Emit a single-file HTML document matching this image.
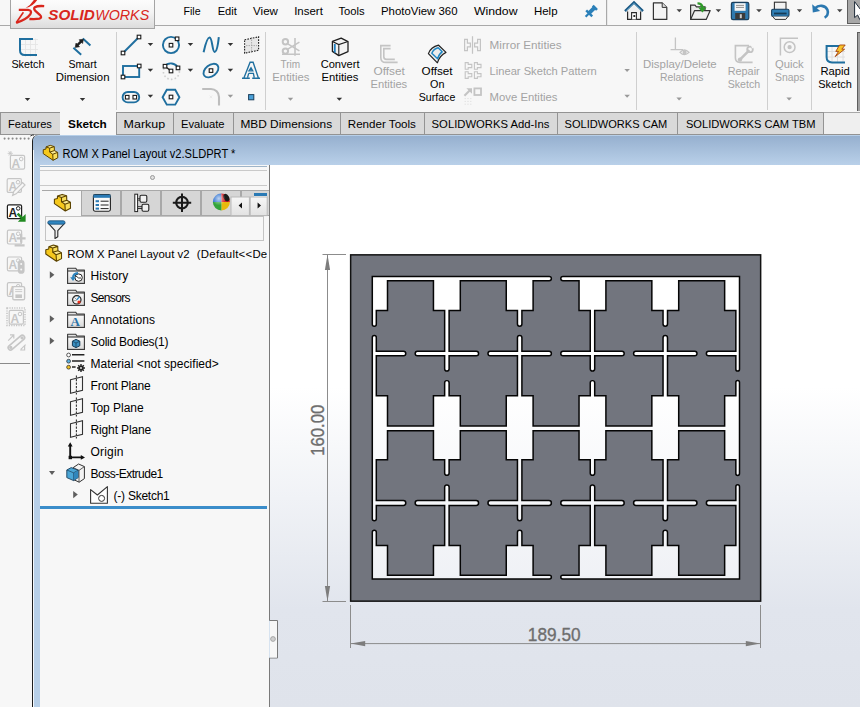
<!DOCTYPE html>
<html><head><meta charset="utf-8"><style>
*{margin:0;padding:0;box-sizing:border-box}
html,body{width:860px;height:707px;overflow:hidden;background:#f7f7f7;font-family:"Liberation Sans", sans-serif;color:#000}
.a{position:absolute}
svg text{font-family:"Liberation Sans",sans-serif}
</style></head>
<body>
<div class="a" style="left:0;top:25px;width:860px;height:1px;background:#a9a9a9"></div>
<div class="a" style="left:10px;top:-1px;width:145px;height:30px;border:1px solid #a4a4a4;background:linear-gradient(#fcfcfc,#f4f4f4 45%,#dcdcdc)"></div>
<div class="a" style="left:605.6px;top:0;width:1.4px;height:25px;background:#a9a9a9"></div>
<div class="a" style="left:607px;top:0;width:1px;height:25px;background:#e9e9e9"></div>
<div class="a" style="left:846.5px;top:-1px;width:14px;height:25px;background:#a7a7a7;border:1px solid #5e5e5e;border-right:none"></div>
<div class="a" style="left:116.0px;top:32px;width:1px;height:78px;background:#cfcfcf"></div>
<div class="a" style="left:264.5px;top:32px;width:1px;height:78px;background:#cfcfcf"></div>
<div class="a" style="left:636.0px;top:32px;width:1px;height:78px;background:#cfcfcf"></div>
<div class="a" style="left:767.0px;top:32px;width:1px;height:78px;background:#cfcfcf"></div>
<div class="a" style="left:811.0px;top:32px;width:1px;height:78px;background:#cfcfcf"></div>
<div class="a" style="left:856.6px;top:31.5px;width:4px;height:79px;background:#a0a0a0;border-left:1.2px solid #5e5e5e;border-top:1px solid #5e5e5e"></div>
<div class="a" style="left:0px;top:112px;width:60.5px;height:22px;background:#d9d9d9;border:1px solid #939393;border-bottom:none"></div>
<div class="a" style="left:59.5px;top:112px;width:56.0px;height:23px;background:#f7f7f7"></div>
<div class="a" style="left:115.5px;top:112px;width:58.0px;height:22px;background:#d9d9d9;border:1px solid #939393;border-bottom:none"></div>
<div class="a" style="left:172.5px;top:112px;width:61.30000000000001px;height:22px;background:#d9d9d9;border:1px solid #939393;border-bottom:none"></div>
<div class="a" style="left:232.8px;top:112px;width:108.39999999999998px;height:22px;background:#d9d9d9;border:1px solid #939393;border-bottom:none"></div>
<div class="a" style="left:340.2px;top:112px;width:85.19999999999999px;height:22px;background:#d9d9d9;border:1px solid #939393;border-bottom:none"></div>
<div class="a" style="left:424.4px;top:112px;width:133.20000000000005px;height:22px;background:#d9d9d9;border:1px solid #939393;border-bottom:none"></div>
<div class="a" style="left:556.6px;top:112px;width:121.79999999999995px;height:22px;background:#d9d9d9;border:1px solid #939393;border-bottom:none"></div>
<div class="a" style="left:677.4px;top:112px;width:147.10000000000002px;height:22px;background:#d9d9d9;border:1px solid #939393;border-bottom:none"></div>
<div class="a" style="left:823.5px;top:112px;width:37px;height:22px;background:#efefef;border-top:1px solid #a8a8a8"></div>
<div class="a" style="left:0;top:133.5px;width:59.5px;height:1.2px;background:#939393"></div>
<div class="a" style="left:115.5px;top:133.5px;width:745px;height:1.2px;background:#939393"></div>
<div class="a" style="left:0;top:362.5px;width:30px;height:1px;background:#8a8a8a"></div>
<div class="a" style="left:32px;top:135px;width:830px;height:580px;background:#b7cfe8;border-left:1.5px solid #1e1e1e;border-top-left-radius:6px"></div>
<div class="a" style="left:33px;top:135.5px;width:827px;height:29.5px;border-top-left-radius:5px;background:linear-gradient(#96b0cf,#b9d0e9)"></div>
<div class="a" style="left:33.3px;top:150px;width:0.8px;height:557px;background:#f4f8fc"></div>
<div class="a" style="left:40px;top:165px;width:229px;height:542px;background:#f7f7f7"></div>
<div class="a" style="left:40px;top:166px;width:227px;height:1px;background:#9eb4c8"></div>
<div class="a" style="left:40px;top:170px;width:227px;height:1px;background:#c9c9c9"></div>
<div class="a" style="left:40px;top:185px;width:227px;height:1px;background:#c9c9c9"></div>
<div class="a" style="left:150px;top:175px;width:5px;height:5px;border-radius:50%;border:1px solid #9a9a9a;background:#e0e0e0"></div>
<div class="a" style="left:42px;top:190px;width:225px;height:1px;background:#a8a8a8"></div>
<div class="a" style="left:41.5px;top:190px;width:40px;height:26px;background:#f7f7f7;border:1px solid #a8a8a8;border-bottom:none;border-left:none"></div>
<div class="a" style="left:81.3px;top:190px;width:40px;height:26px;background:#d6d6d6;border:1px solid #a8a8a8"></div>
<div class="a" style="left:121.1px;top:190px;width:40px;height:26px;background:#d6d6d6;border:1px solid #a8a8a8"></div>
<div class="a" style="left:160.89999999999998px;top:190px;width:40px;height:26px;background:#d6d6d6;border:1px solid #a8a8a8"></div>
<div class="a" style="left:200.7px;top:190px;width:40px;height:26px;background:#d6d6d6;border:1px solid #a8a8a8"></div>
<div class="a" style="left:240.5px;top:190px;width:40px;height:26px;background:#d6d6d6;border:1px solid #a8a8a8"></div>
<div class="a" style="left:45px;top:215.8px;width:219px;height:25.6px;background:#f7f7f7;border:1px solid #c4c4c4"></div>
<div class="a" style="left:40px;top:506px;width:227px;height:3px;background:#3b8dca"></div>
<div class="a" style="left:269.5px;top:165px;width:591px;height:542px;background:linear-gradient(#ffffff 0%,#ffffff 41%,#e1e5ed 82%,#dfe3eb 100%)"></div>
<svg class="a" style="left:0;top:0" width="860" height="707"><path d="M269.5,165 V620.5 H277.5 V658 H269.5 V707" fill="none" stroke="#7a7a7a" stroke-width="1"/><rect x="269.5" y="621" width="7.5" height="36.5" fill="#f7f7f7"/><circle cx="273" cy="639" r="2.4" fill="#d0d0d0" stroke="#9a9a9a" stroke-width="0.8"/></svg>
<svg width="860" height="707" style="position:absolute;left:0;top:0">
<defs><linearGradient id="bg" gradientUnits="userSpaceOnUse" x1="0" y1="165" x2="0" y2="707"><stop offset="0" stop-color="#ffffff"/><stop offset="0.41" stop-color="#ffffff"/><stop offset="0.82" stop-color="#edeff4"/><stop offset="1" stop-color="#e9ecf2"/></linearGradient></defs>
<rect x="350.65" y="254.85" width="410" height="346.3" fill="#72757e" stroke="#121212" stroke-width="1.5"/>
<path d="M371.55,275.65H388.25V311.25H371.55ZM432.70,275.65H461.05V311.25H432.70ZM505.50,275.65H533.85V311.25H505.50ZM578.30,275.65H606.65V311.25H578.30ZM651.10,275.65H679.45V311.25H651.10ZM723.90,275.65H740.25V311.25H723.90ZM371.55,395.05H388.25V460.45H371.55ZM432.70,395.05H461.05V460.45H432.70ZM505.50,395.05H533.85V460.45H505.50ZM578.30,395.05H606.65V460.45H578.30ZM651.10,395.05H679.45V460.45H651.10ZM723.90,395.05H740.25V460.45H723.90ZM371.55,544.85H388.25V579.75H371.55ZM432.70,544.85H461.05V579.75H432.70ZM505.50,544.85H533.85V579.75H505.50ZM578.30,544.85H606.65V579.75H578.30ZM651.10,544.85H679.45V579.75H651.10ZM723.90,544.85H740.25V579.75H723.90ZM371.55,275.65H549.17A2.95,2.95 0 0 1 549.17,281.55H371.55V275.65ZM562.98,275.65H740.25V281.55H562.98A2.95,2.95 0 0 1 562.98,275.65ZM371.55,574.45H549.48A2.65,2.65 0 0 1 549.48,579.75H371.55V574.45ZM562.68,574.45H740.25V579.75H562.68A2.65,2.65 0 0 1 562.68,574.45ZM371.55,425.25H740.25V431.55H371.55V425.25ZM371.55,350.55H403.53A3.00,3.00 0 0 1 403.53,356.55H371.55V350.55ZM417.43,350.55H476.33A3.00,3.00 0 0 1 476.33,356.55H417.43A3.00,3.00 0 0 1 417.43,350.55ZM490.23,350.55H549.12A3.00,3.00 0 0 1 549.12,356.55H490.23A3.00,3.00 0 0 1 490.23,350.55ZM563.03,350.55H621.92A3.00,3.00 0 0 1 621.92,356.55H563.03A3.00,3.00 0 0 1 563.03,350.55ZM635.83,350.55H694.72A3.00,3.00 0 0 1 694.72,356.55H635.83A3.00,3.00 0 0 1 635.83,350.55ZM708.62,350.55H740.25V356.55H708.62A3.00,3.00 0 0 1 708.62,350.55ZM371.55,499.85H403.38A3.15,3.15 0 0 1 403.38,506.15H371.55V499.85ZM417.57,499.85H476.18A3.15,3.15 0 0 1 476.18,506.15H417.57A3.15,3.15 0 0 1 417.57,499.85ZM490.38,499.85H548.98A3.15,3.15 0 0 1 548.98,506.15H490.38A3.15,3.15 0 0 1 490.38,499.85ZM563.18,499.85H621.77A3.15,3.15 0 0 1 621.77,506.15H563.18A3.15,3.15 0 0 1 563.18,499.85ZM635.98,499.85H694.57A3.15,3.15 0 0 1 694.57,506.15H635.98A3.15,3.15 0 0 1 635.98,499.85ZM708.77,499.85H740.25V506.15H708.77A3.15,3.15 0 0 1 708.77,499.85ZM371.55,306.75V306.75H377.05V324.20A2.75,2.75 0 0 1 371.55,324.20ZM371.55,337.60A2.75,2.75 0 0 1 377.05,337.60V399.55H371.55ZM371.55,455.95V455.95H377.05V518.80A2.75,2.75 0 0 1 371.55,518.80ZM371.55,532.20A2.75,2.75 0 0 1 377.05,532.20V549.35H371.55ZM443.90,306.75V306.75H449.85V368.88A2.98,2.98 0 0 1 443.90,368.88ZM443.90,382.73A2.98,2.98 0 0 1 449.85,382.73V399.55H443.90ZM443.90,455.95V455.95H449.85V473.22A2.98,2.98 0 0 1 443.90,473.22ZM443.90,487.07A2.98,2.98 0 0 1 449.85,487.07V549.35H443.90ZM516.70,306.75V306.75H522.65V323.98A2.97,2.97 0 0 1 516.70,323.98ZM516.70,337.82A2.97,2.97 0 0 1 522.65,337.82V399.55H516.70ZM516.70,455.95V455.95H522.65V518.58A2.97,2.97 0 0 1 516.70,518.58ZM516.70,532.42A2.97,2.97 0 0 1 522.65,532.42V549.35H516.70ZM589.50,306.75V306.75H595.45V368.88A2.98,2.98 0 0 1 589.50,368.88ZM589.50,382.73A2.98,2.98 0 0 1 595.45,382.73V399.55H589.50ZM589.50,455.95V455.95H595.45V473.22A2.98,2.98 0 0 1 589.50,473.22ZM589.50,487.07A2.98,2.98 0 0 1 595.45,487.07V549.35H589.50ZM662.30,306.75V306.75H668.25V323.98A2.97,2.97 0 0 1 662.30,323.98ZM662.30,337.82A2.97,2.97 0 0 1 668.25,337.82V399.55H662.30ZM662.30,455.95V455.95H668.25V518.58A2.97,2.97 0 0 1 662.30,518.58ZM662.30,532.42A2.97,2.97 0 0 1 668.25,532.42V549.35H662.30ZM735.10,306.75V306.75H740.25V369.28A2.57,2.57 0 0 1 735.10,369.28ZM735.10,382.32A2.57,2.57 0 0 1 740.25,382.32V399.55H735.10ZM735.10,455.95V455.95H740.25V473.62A2.57,2.57 0 0 1 735.10,473.62ZM735.10,486.67A2.57,2.57 0 0 1 740.25,486.67V549.35H735.10Z" fill="#050505"/>
<path d="M373.05,277.15H386.75V309.75H373.05ZM434.20,277.15H459.55V309.75H434.20ZM507.00,277.15H532.35V309.75H507.00ZM579.80,277.15H605.15V309.75H579.80ZM652.60,277.15H677.95V309.75H652.60ZM725.40,277.15H738.75V309.75H725.40ZM373.05,396.55H386.75V458.95H373.05ZM434.20,396.55H459.55V458.95H434.20ZM507.00,396.55H532.35V458.95H507.00ZM579.80,396.55H605.15V458.95H579.80ZM652.60,396.55H677.95V458.95H652.60ZM725.40,396.55H738.75V458.95H725.40ZM373.05,546.35H386.75V578.25H373.05ZM434.20,546.35H459.55V578.25H434.20ZM507.00,546.35H532.35V578.25H507.00ZM579.80,546.35H605.15V578.25H579.80ZM652.60,546.35H677.95V578.25H652.60ZM725.40,546.35H738.75V578.25H725.40ZM373.05,277.15H549.17A1.45,1.45 0 0 1 549.17,280.05H373.05V277.15ZM562.98,277.15H738.75V280.05H562.98A1.45,1.45 0 0 1 562.98,277.15ZM373.05,575.95H549.48A1.15,1.15 0 0 1 549.48,578.25H373.05V575.95ZM562.68,575.95H738.75V578.25H562.68A1.15,1.15 0 0 1 562.68,575.95ZM373.05,426.75H738.75V430.05H373.05V426.75ZM373.05,352.05H403.53A1.50,1.50 0 0 1 403.53,355.05H373.05V352.05ZM417.43,352.05H476.33A1.50,1.50 0 0 1 476.33,355.05H417.43A1.50,1.50 0 0 1 417.43,352.05ZM490.23,352.05H549.12A1.50,1.50 0 0 1 549.12,355.05H490.23A1.50,1.50 0 0 1 490.23,352.05ZM563.03,352.05H621.92A1.50,1.50 0 0 1 621.92,355.05H563.03A1.50,1.50 0 0 1 563.03,352.05ZM635.83,352.05H694.72A1.50,1.50 0 0 1 694.72,355.05H635.83A1.50,1.50 0 0 1 635.83,352.05ZM708.62,352.05H738.75V355.05H708.62A1.50,1.50 0 0 1 708.62,352.05ZM373.05,501.35H403.38A1.65,1.65 0 0 1 403.38,504.65H373.05V501.35ZM417.57,501.35H476.18A1.65,1.65 0 0 1 476.18,504.65H417.57A1.65,1.65 0 0 1 417.57,501.35ZM490.38,501.35H548.98A1.65,1.65 0 0 1 548.98,504.65H490.38A1.65,1.65 0 0 1 490.38,501.35ZM563.18,501.35H621.77A1.65,1.65 0 0 1 621.77,504.65H563.18A1.65,1.65 0 0 1 563.18,501.35ZM635.98,501.35H694.57A1.65,1.65 0 0 1 694.57,504.65H635.98A1.65,1.65 0 0 1 635.98,501.35ZM708.77,501.35H738.75V504.65H708.77A1.65,1.65 0 0 1 708.77,501.35ZM373.05,308.25V308.25H375.55V324.20A1.25,1.25 0 0 1 373.05,324.20ZM373.05,337.60A1.25,1.25 0 0 1 375.55,337.60V398.05H373.05ZM373.05,457.45V457.45H375.55V518.80A1.25,1.25 0 0 1 373.05,518.80ZM373.05,532.20A1.25,1.25 0 0 1 375.55,532.20V547.85H373.05ZM445.40,308.25V308.25H448.35V368.88A1.48,1.48 0 0 1 445.40,368.88ZM445.40,382.73A1.48,1.48 0 0 1 448.35,382.73V398.05H445.40ZM445.40,457.45V457.45H448.35V473.22A1.48,1.48 0 0 1 445.40,473.22ZM445.40,487.07A1.48,1.48 0 0 1 448.35,487.07V547.85H445.40ZM518.20,308.25V308.25H521.15V323.98A1.47,1.47 0 0 1 518.20,323.98ZM518.20,337.82A1.47,1.47 0 0 1 521.15,337.82V398.05H518.20ZM518.20,457.45V457.45H521.15V518.58A1.47,1.47 0 0 1 518.20,518.58ZM518.20,532.42A1.47,1.47 0 0 1 521.15,532.42V547.85H518.20ZM591.00,308.25V308.25H593.95V368.88A1.48,1.48 0 0 1 591.00,368.88ZM591.00,382.73A1.48,1.48 0 0 1 593.95,382.73V398.05H591.00ZM591.00,457.45V457.45H593.95V473.22A1.48,1.48 0 0 1 591.00,473.22ZM591.00,487.07A1.48,1.48 0 0 1 593.95,487.07V547.85H591.00ZM663.80,308.25V308.25H666.75V323.98A1.47,1.47 0 0 1 663.80,323.98ZM663.80,337.82A1.47,1.47 0 0 1 666.75,337.82V398.05H663.80ZM663.80,457.45V457.45H666.75V518.58A1.47,1.47 0 0 1 663.80,518.58ZM663.80,532.42A1.47,1.47 0 0 1 666.75,532.42V547.85H663.80ZM736.60,308.25V308.25H738.75V369.28A1.07,1.07 0 0 1 736.60,369.28ZM736.60,382.32A1.07,1.07 0 0 1 738.75,382.32V398.05H736.60ZM736.60,457.45V457.45H738.75V473.62A1.07,1.07 0 0 1 736.60,473.62ZM736.60,486.67A1.07,1.07 0 0 1 738.75,486.67V547.85H736.60Z" fill="url(#bg)"/>
<g stroke="#8c8c8c" stroke-width="1" fill="none">
<path d="M322.5,254.5H346M322.5,601.5H346M327.5,254.5V601.5"/>
<path d="M350.5,605V648M760.5,605V648M350.5,643.6H760.5"/>
</g>
<g fill="#7d7d7d">
<path d="M327.5,254.5L324.9,270L330.1,270Z"/><path d="M327.5,601.5L324.9,586L330.1,586Z"/>
<path d="M350.7,643.6L365.2,641L365.2,646.2Z"/><path d="M760.3,643.6L745.8,641L745.8,646.2Z"/>
</g>
<text x="0" y="0" transform="translate(324.2,430.2) rotate(-90)" text-anchor="middle" font-family="Liberation Sans" font-size="18.8" fill="#6e6e6e" stroke="#6e6e6e" stroke-width="0.35" textLength="51" lengthAdjust="spacingAndGlyphs">160.00</text>
<text x="554.2" y="640.6" text-anchor="middle" font-family="Liberation Sans" font-size="19" fill="#6e6e6e" stroke="#6e6e6e" stroke-width="0.35" textLength="52.8" lengthAdjust="spacingAndGlyphs">189.50</text>
</svg>
<svg width="860" height="707" style="position:absolute;left:0;top:0">
<text x="183.5" y="14.9" font-size="11" fill="#000" textLength="17.1" lengthAdjust="spacingAndGlyphs">File</text>
<text x="217.7" y="14.9" font-size="11" fill="#000" textLength="19.2" lengthAdjust="spacingAndGlyphs">Edit</text>
<text x="253.1" y="14.9" font-size="11" fill="#000" textLength="24.8" lengthAdjust="spacingAndGlyphs">View</text>
<text x="294.2" y="14.9" font-size="11" fill="#000" textLength="28.7" lengthAdjust="spacingAndGlyphs">Insert</text>
<text x="338.4" y="14.9" font-size="11" fill="#000" textLength="26.2" lengthAdjust="spacingAndGlyphs">Tools</text>
<text x="381.0" y="14.9" font-size="11" fill="#000" textLength="76.5" lengthAdjust="spacingAndGlyphs">PhotoView 360</text>
<text x="474.0" y="14.9" font-size="11" fill="#000" textLength="43.5" lengthAdjust="spacingAndGlyphs">Window</text>
<text x="534.0" y="14.9" font-size="11" fill="#000" textLength="23.5" lengthAdjust="spacingAndGlyphs">Help</text>
<text x="11.4" y="67.9" font-size="11.2" fill="#000" textLength="33.0" lengthAdjust="spacingAndGlyphs">Sketch</text>
<text x="68.4" y="67.9" font-size="11.2" fill="#000" textLength="28.2" lengthAdjust="spacingAndGlyphs">Smart</text>
<text x="55.8" y="81.0" font-size="11.2" fill="#000" textLength="53.7" lengthAdjust="spacingAndGlyphs">Dimension</text>
<text x="280.5" y="68.3" font-size="11.2" fill="#a3a3a3" textLength="19.7" lengthAdjust="spacingAndGlyphs">Trim</text>
<text x="272.3" y="81.1" font-size="11.2" fill="#a3a3a3" textLength="37.2" lengthAdjust="spacingAndGlyphs">Entities</text>
<text x="320.7" y="68.3" font-size="11.2" fill="#000" textLength="38.8" lengthAdjust="spacingAndGlyphs">Convert</text>
<text x="321.6" y="81.1" font-size="11.2" fill="#000" textLength="36.8" lengthAdjust="spacingAndGlyphs">Entities</text>
<text x="373.5" y="75.3" font-size="11.2" fill="#a3a3a3" textLength="31.4" lengthAdjust="spacingAndGlyphs">Offset</text>
<text x="370.5" y="88.1" font-size="11.2" fill="#a3a3a3" textLength="36.7" lengthAdjust="spacingAndGlyphs">Entities</text>
<text x="421.6" y="75.3" font-size="11.2" fill="#000" textLength="31.0" lengthAdjust="spacingAndGlyphs">Offset</text>
<text x="430.0" y="88.1" font-size="11.2" fill="#000" textLength="14.4" lengthAdjust="spacingAndGlyphs">On</text>
<text x="418.8" y="100.9" font-size="11.2" fill="#000" textLength="36.5" lengthAdjust="spacingAndGlyphs">Surface</text>
<text x="489.6" y="49.1" font-size="11.2" fill="#a3a3a3" textLength="72.0" lengthAdjust="spacingAndGlyphs">Mirror Entities</text>
<text x="489.6" y="75.2" font-size="11.2" fill="#a3a3a3" textLength="107.2" lengthAdjust="spacingAndGlyphs">Linear Sketch Pattern</text>
<text x="489.6" y="101.0" font-size="11.2" fill="#a3a3a3" textLength="67.9" lengthAdjust="spacingAndGlyphs">Move Entities</text>
<text x="643.1" y="68.3" font-size="11.2" fill="#a3a3a3" textLength="73.6" lengthAdjust="spacingAndGlyphs">Display/Delete</text>
<text x="660.0" y="81.1" font-size="11.2" fill="#a3a3a3" textLength="43.4" lengthAdjust="spacingAndGlyphs">Relations</text>
<text x="727.7" y="75.2" font-size="11.2" fill="#a3a3a3" textLength="32.0" lengthAdjust="spacingAndGlyphs">Repair</text>
<text x="727.7" y="88.0" font-size="11.2" fill="#a3a3a3" textLength="32.5" lengthAdjust="spacingAndGlyphs">Sketch</text>
<text x="775.0" y="68.3" font-size="11.2" fill="#a3a3a3" textLength="28.7" lengthAdjust="spacingAndGlyphs">Quick</text>
<text x="775.0" y="81.1" font-size="11.2" fill="#a3a3a3" textLength="29.5" lengthAdjust="spacingAndGlyphs">Snaps</text>
<text x="820.4" y="75.2" font-size="11.2" fill="#000" textLength="29.4" lengthAdjust="spacingAndGlyphs">Rapid</text>
<text x="818.3" y="88.0" font-size="11.2" fill="#000" textLength="33.5" lengthAdjust="spacingAndGlyphs">Sketch</text>
<text x="8.0" y="127.6" font-size="11.3" fill="#000" textLength="43.9" lengthAdjust="spacingAndGlyphs">Features</text>
<text x="123.6" y="127.6" font-size="11.3" fill="#000" textLength="41.5" lengthAdjust="spacingAndGlyphs">Markup</text>
<text x="181.0" y="127.6" font-size="11.3" fill="#000" textLength="43.6" lengthAdjust="spacingAndGlyphs">Evaluate</text>
<text x="240.4" y="127.6" font-size="11.3" fill="#000" textLength="91.7" lengthAdjust="spacingAndGlyphs">MBD Dimensions</text>
<text x="347.8" y="127.6" font-size="11.3" fill="#000" textLength="68.1" lengthAdjust="spacingAndGlyphs">Render Tools</text>
<text x="431.6" y="127.6" font-size="11.3" fill="#000" textLength="117.8" lengthAdjust="spacingAndGlyphs">SOLIDWORKS Add-Ins</text>
<text x="564.6" y="127.6" font-size="11.3" fill="#000" textLength="102.7" lengthAdjust="spacingAndGlyphs">SOLIDWORKS CAM</text>
<text x="685.9" y="127.6" font-size="11.3" fill="#000" textLength="129.6" lengthAdjust="spacingAndGlyphs">SOLIDWORKS CAM TBM</text>
<text x="68.1" y="127.6" font-size="11.6" fill="#000" font-weight="bold" textLength="38.6" lengthAdjust="spacingAndGlyphs">Sketch</text>
<text x="62.4" y="157.9" font-size="12.3" fill="#000" textLength="173.0" lengthAdjust="spacingAndGlyphs">ROM X Panel Layout v2.SLDPRT *</text>
<text x="90.5" y="279.6" font-size="12" fill="#000" textLength="37.7" lengthAdjust="spacing">History</text>
<text x="90.5" y="301.6" font-size="12" fill="#000" textLength="40.0" lengthAdjust="spacing">Sensors</text>
<text x="90.5" y="323.6" font-size="12" fill="#000" textLength="64.5" lengthAdjust="spacing">Annotations</text>
<text x="90.5" y="345.6" font-size="12" fill="#000" textLength="78.0" lengthAdjust="spacing">Solid Bodies(1)</text>
<text x="90.5" y="367.6" font-size="12" fill="#000" textLength="128.3" lengthAdjust="spacing">Material &lt;not specified&gt;</text>
<text x="90.5" y="389.6" font-size="12" fill="#000" textLength="60.2" lengthAdjust="spacing">Front Plane</text>
<text x="90.5" y="411.6" font-size="12" fill="#000" textLength="53.1" lengthAdjust="spacing">Top Plane</text>
<text x="90.5" y="433.6" font-size="12" fill="#000" textLength="60.7" lengthAdjust="spacing">Right Plane</text>
<text x="90.5" y="455.6" font-size="12" fill="#000" textLength="33.0" lengthAdjust="spacing">Origin</text>
<text x="90.5" y="477.6" font-size="12" fill="#000" textLength="72.8" lengthAdjust="spacing">Boss-Extrude1</text>
<text x="113.6" y="499.6" font-size="12" fill="#000" textLength="56.2" lengthAdjust="spacing">(-) Sketch1</text>
<svg x="0" y="0" width="267" height="707"><text x="67.3" y="257.7" font-size="11.4" fill="#000">ROM X Panel Layout v2</text><text x="196.8" y="257.7" font-size="11.4" fill="#000" textLength="70.4" lengthAdjust="spacing">(Default&lt;&lt;De</text></svg>
<path d="M676.5,9.3H682.0L679.3,12.3Z" fill="#444"/>
<path d="M715.6,9.3H721.1L718.4,12.3Z" fill="#444"/>
<path d="M756.2,9.3H761.8L759.0,12.3Z" fill="#444"/>
<path d="M796.8,9.3H802.2L799.5,12.3Z" fill="#444"/>
<path d="M837.0,9.3H842.5L839.7,12.3Z" fill="#444"/>
<path d="M24.8,97.9H30.2L27.5,100.9Z" fill="#333"/>
<path d="M79.8,97.9H85.2L82.5,100.9Z" fill="#333"/>
<path d="M147.7,42.9H153.2L150.4,45.9Z" fill="#333"/>
<path d="M147.7,68.8H153.2L150.4,71.8Z" fill="#333"/>
<path d="M147.7,94.8H153.2L150.4,97.8Z" fill="#333"/>
<path d="M187.7,42.9H193.2L190.4,45.9Z" fill="#333"/>
<path d="M187.7,68.8H193.2L190.4,71.8Z" fill="#333"/>
<path d="M227.7,42.9H233.2L230.4,45.9Z" fill="#333"/>
<path d="M227.7,68.8H233.2L230.4,71.8Z" fill="#333"/>
<path d="M227.7,94.8H233.2L230.4,97.8Z" fill="#999"/>
<path d="M287.8,97.8H293.2L290.5,100.8Z" fill="#999"/>
<path d="M336.6,97.8H342.1L339.3,100.8Z" fill="#333"/>
<path d="M624.4,69.0H629.9L627.1,72.0Z" fill="#999"/>
<path d="M624.4,94.8H629.9L627.1,97.8Z" fill="#999"/>
<path d="M676.4,97.5H681.9L679.1,100.5Z" fill="#999"/>
<path d="M786.4,97.5H791.9L789.1,100.5Z" fill="#999"/>
<path d="M25.6,8 Q30.6,5.4 34.2,-0.6 L37.6,-0.6 Q33.4,6.4 25.6,8 Z" fill="#d9261c"/>
<path d="M18.8,9.9 H28 Q32.6,10.4 30.2,14.4 Q26.6,19.6 16.2,22.8" fill="none" stroke="#d9261c" stroke-width="2.3"/>
<path d="M16.2,22.8 L23.4,12.2" fill="none" stroke="#d9261c" stroke-width="1.6"/>
<path d="M44.2,6.1 Q37.4,5.6 34.8,7.2 Q33,8.8 36.2,11.6 L39.8,14.8 Q42.6,17.6 39.4,18.7 Q35.6,19.4 29.4,19" fill="none" stroke="#d9261c" stroke-width="2.3"/>
<text x="48.3" y="19.6" font-size="14.2" font-weight="bold" font-style="italic" fill="#d9261c" textLength="46.5" lengthAdjust="spacingAndGlyphs">SOLID</text>
<text x="95.2" y="19.6" font-size="14.2" font-style="italic" fill="#d9261c" textLength="54" lengthAdjust="spacingAndGlyphs">WORKS</text>
<g stroke="#2b80b9" stroke-linecap="butt"><path d="M585.6,16.8 L594.4,8" stroke-width="2.2"/><path d="M586.2,10.4 L592.2,16.4" stroke-width="2.4"/><path d="M592.8,5.6 L597,9.8" stroke-width="2.6"/><path d="M589,13.2 L594.6,7.6" stroke-width="4"/></g>
<path d="M626.4,10.6 L634,3.6 L641.6,10.6 V19.6 H626.4 Z" fill="#f0f0f0"/>
<path d="M625,11.2 L634,2.4 L643,11.2" fill="none" stroke="#1d5a85" stroke-width="2.4" stroke-linejoin="miter"/>
<path d="M626.4,10.6 L634,3.4 L641.6,10.6" fill="none" stroke="#6aaed6" stroke-width="0.8"/>
<path d="M627.6,11.6 V19.4 H640.6 V11.6" fill="none" stroke="#2a2a2a" stroke-width="1.2"/>
<path d="M631.6,19.4 V12.6 H636.4 V19.4" fill="#fff" stroke="#2a2a2a" stroke-width="1.1"/><rect x="633.4" y="15" width="1.8" height="2" fill="#2a2a2a"/>
<path d="M653.4,2.8 H662.2 L666.8,7.4 V19.4 H653.4 Z" fill="#f4f4f4" stroke="#333" stroke-width="1.2" stroke-linejoin="round"/><path d="M662.2,2.8 V7.4 H666.8" fill="#ddd" stroke="#333" stroke-width="1"/>
<path d="M690.6,19.4 V5.2 H695 L696.4,6.8 H705 V10" fill="#e8e8e8" stroke="#333" stroke-width="1.2"/>
<path d="M690.6,19.4 L694.6,10.6 H710.2 L706.2,19.4 Z" fill="#f0f0f0" stroke="#333" stroke-width="1.2" stroke-linejoin="round"/>
<path d="M697.5,2.2 C701,2.2 703.4,4 703.8,7.6 L706.6,7.6 L702.4,12.4 L698.2,7.6 L701,7.6 C700.8,5.4 699.6,4.2 697.5,4.4 Z" fill="#2f9a2a"/>
<rect x="731.4" y="2.4" width="17.4" height="17.2" rx="1.6" fill="#2f79ae" stroke="#1b3f5c" stroke-width="1.2"/>
<rect x="734.6" y="3.2" width="11" height="7.6" fill="#f4f4f4"/><path d="M736,5.4H744M736,7.4H744" stroke="#777" stroke-width="0.8"/>
<rect x="735.2" y="13" width="10" height="6" fill="#3a3a3a"/><rect x="739.8" y="14.2" width="2" height="4" fill="#ccc"/>
<rect x="774.4" y="2.2" width="11.6" height="8" fill="#f2f2f2" stroke="#333" stroke-width="1.1"/>
<rect x="771.6" y="9.2" width="17.4" height="7.2" rx="1.4" fill="#2f7fb6" stroke="#1b3f5c" stroke-width="1.1"/>
<rect x="774" y="12.6" width="12.6" height="1.8" fill="#163a55"/>
<path d="M772.8,16.4 L775,19.4 H785.8 L788,16.4" fill="#f2f2f2" stroke="#333" stroke-width="1"/>
<path d="M815.2,8.2 C818.5,4.6 825.5,5 827.4,9.8 C829,13.6 826.8,16.6 824.6,17.6" fill="none" stroke="#2b78b0" stroke-width="2.6"/>
<path d="M812.2,4.2 L812.8,12.4 L820.2,11 Z" fill="#2b78b0"/>
<path d="M854.6,1.6 V17.6 L857.6,15 L859.8,19.6 L862,18.8 L860,14.2 L864,14.2 Z" fill="#fff" stroke="#1e2a38" stroke-width="1"/>
<g stroke="#e4e4e4" stroke-width="0.9"><path d="M25.5,38.5V57M30.5,38.5V57M35.5,38.5V57M20,44.5H38M20,49.5H38M20,39.5H38"/></g>
<path d="M33,39 H20 V50.2 Q20,55 24.8,55 H37" fill="none" stroke="#1f6f9f" stroke-width="2"/>
<path d="M73.4,47.8 L81.2,54.8 M82.8,38.6 L90.4,45.6" stroke="#1f6f9f" stroke-width="2" fill="none"/>
<path d="M75.2,47.4 L79.5,46.8 L76,43.1 Z M83.4,39.2 L79.1,39.8 L82.6,43.5 Z" fill="#1e1e1e" stroke="#1e1e1e" stroke-width="0.6" stroke-linejoin="round"/><path d="M77.4,45.2 L81.2,41.4" stroke="#1e1e1e" stroke-width="2.4"/>
<path d="M123,53 L139,37" stroke="#1f6f9f" stroke-width="2"/><rect x="121.20" y="51.20" width="3.6" height="3.6" fill="#fff" stroke="#1a1a1a" stroke-width="1.1"/><rect x="137.20" y="35.20" width="3.6" height="3.6" fill="#fff" stroke="#1a1a1a" stroke-width="1.1"/>
<circle cx="171" cy="45" r="8.1" fill="none" stroke="#1f6f9f" stroke-width="1.9"/><rect x="169.20" y="43.40" width="3.6" height="3.6" fill="#fff" stroke="#1a1a1a" stroke-width="1.1"/><rect x="175.30" y="37.00" width="3.6" height="3.6" fill="#fff" stroke="#1a1a1a" stroke-width="1.1"/>
<path d="M203.6,52.2 C205,46 207,37.5 209.6,37.6 C212.4,37.7 212.2,51.8 214.6,51.9 C217,52 218.2,43 218.8,37.2" fill="none" stroke="#1f6f9f" stroke-width="2"/>
<path d="M244.6,39.8 L258.6,36.8 L258.6,50.2 L244.6,53.2 Z" fill="#e6e6e6" stroke="#222" stroke-width="1.1" stroke-dasharray="1.6,1.2"/>
<path d="M251.6,37V53M246,45.6H257" stroke="#9a9a9a" stroke-width="0.8" stroke-dasharray="1.5,1"/>
<rect x="123" y="66" width="16.2" height="11" fill="none" stroke="#1f6f9f" stroke-width="1.9"/><rect x="137.40" y="64.20" width="3.6" height="3.6" fill="#fff" stroke="#1a1a1a" stroke-width="1.1"/><rect x="121.20" y="75.20" width="3.6" height="3.6" fill="#fff" stroke="#1a1a1a" stroke-width="1.1"/>
<circle cx="171.4" cy="71.4" r="8" fill="none" stroke="#cfcfcf" stroke-width="1.6" stroke-dasharray="1.6,2.2"/>
<path d="M164.6,66.4 A8,8 0 0 1 178,67.8" fill="none" stroke="#1f6f9f" stroke-width="1.9"/>
<path d="M165,66.2 L171,71" stroke="#222" stroke-width="1.3"/><rect x="163.20" y="64.40" width="3.6" height="3.6" fill="#fff" stroke="#1a1a1a" stroke-width="1.1"/><rect x="169.20" y="69.20" width="3.6" height="3.6" fill="#fff" stroke="#1a1a1a" stroke-width="1.1"/><rect x="176.20" y="66.10" width="3.6" height="3.6" fill="#fff" stroke="#1a1a1a" stroke-width="1.1"/>
<ellipse cx="211" cy="70.6" rx="8.4" ry="5.6" transform="rotate(-38 211 70.6)" fill="none" stroke="#1f6f9f" stroke-width="1.9"/><rect x="209.20" y="68.80" width="3.6" height="3.6" fill="#fff" stroke="#1a1a1a" stroke-width="1.1"/>
<path d="M242,78.2 H249.8 M252.2,78.2 H260 M243.9,78 L250.1,62.2 H253.1 L258.4,78 M249,70.9 H252.7 L251,67.9 Z M248.7,73.4 H253.4 L254.2,77.4 M248.7,73.4 L247.6,77.4" fill="none" stroke="#1f6f9f" stroke-width="1.35"/>
<rect x="122.6" y="92" width="16.6" height="10.4" rx="5.2" fill="none" stroke="#1f6f9f" stroke-width="1.9"/><rect x="125.40" y="95.40" width="3.6" height="3.6" fill="#fff" stroke="#1a1a1a" stroke-width="1.1"/><rect x="133.00" y="95.40" width="3.6" height="3.6" fill="#fff" stroke="#1a1a1a" stroke-width="1.1"/>
<path d="M162.6,97.2 L166.8,89.8 H175.2 L179.4,97.2 L175.2,104.6 H166.8 Z" fill="none" stroke="#1f6f9f" stroke-width="1.9"/><rect x="169.20" y="95.20" width="3.6" height="3.6" fill="#fff" stroke="#1a1a1a" stroke-width="1.1"/>
<path d="M202.2,89 H211 A8,8 0 0 1 219,97 V105.6" fill="none" stroke="#bdbdbd" stroke-width="2.1"/>
<path d="M209.6,95.6L212.2,98.2M212.2,95.6L209.6,98.2" stroke="#e4e4e4" stroke-width="0.8"/>
<rect x="248.6" y="94.6" width="5.2" height="5.2" fill="#4aa0d8" stroke="#1b3f5c" stroke-width="1"/>
<g fill="none" stroke="#c4c4c4"><circle cx="285.4" cy="41.8" r="2.7" stroke-width="2"/><circle cx="285.4" cy="51.1" r="2.7" stroke-width="2"/><path d="M287.8,43.8 L299.4,50.8 M287.8,49.2 L299.4,42.2" stroke-width="1.5"/><path d="M295,38 V55.8 M282,54.2 H300" stroke-width="1.6"/></g>
<path d="M332.4,41.4 L341.2,38.2 L348,41.6 L348,51.6 L338.8,55.6 L332.4,51.4 Z" fill="#f2f2f2" stroke="#1e1e1e" stroke-width="1.3" stroke-linejoin="round"/>
<path d="M332.4,41.4 L338.8,44.6 L348,41.6 M338.8,44.6 V55.6" fill="none" stroke="#1e1e1e" stroke-width="1.1"/>
<path d="M334.8,44 V52.6" stroke="#1f7fbf" stroke-width="1.8"/>
<path d="M390.6,45.6 H380.8 V57.4 Q380.8,62.4 385.8,62.4 H397.6 M390.6,48.6 H383.8 V56.8 Q383.8,59.4 386.4,59.4 H394.8" fill="none" stroke="#c4c4c4" stroke-width="1.6"/>
<path d="M428.4,53.6 C430,49 433,46.6 438.6,45.2 L446,52.4 C441.6,54.6 438.8,58.2 437.4,62.8 Z" fill="#ececec" stroke="#222" stroke-width="1.2" stroke-linejoin="round"/>
<path d="M431.8,53.2 C433,50.4 435,48.6 438.2,47.8 L442.2,51.8 C439.8,53.4 438.4,55.6 437.6,58.8 Z" fill="none" stroke="#1f86c2" stroke-width="1.4" stroke-linejoin="round"/>
<g fill="none" stroke="#c4c4c4" stroke-width="1.2"><path d="M472.5,36.2 V53.8"/><path d="M464.6,39.4 H467.4 V43.2 H470.4 V46.9 H467.4 V50.6 H464.6 Z"/><path d="M480.4,39.4 H477.6 V43.2 H474.6 V46.9 H477.6 V50.6 H480.4 Z"/></g>
<path d="M465.2,62.6 H468.2 V64.4 H471.8 V67.6 H468.2 V69.2 H465.2 Z M465.2,71.8 H468.2 V73.6 H471.8 V76.8 H468.2 V78.4 H465.2 Z M474.4,62.6 H477.4 V64.4 H481.0 V67.6 H477.4 V69.2 H474.4 Z M474.4,71.8 H477.4 V73.6 H481.0 V76.8 H477.4 V78.4 H474.4 Z" fill="none" stroke="#c4c4c4" stroke-width="1.1"/>
<path d="M464.4,95.8 L470.4,89.8" stroke="#c4c4c4" stroke-width="2"/><path d="M466.4,88.2 H472 V93.8 Z" fill="#c4c4c4"/><rect x="474.4" y="88.4" width="6.6" height="6.6" fill="none" stroke="#c4c4c4" stroke-width="1.8"/>
<path d="M464.6,98.6H472M464.6,101.4H472M464.6,104.2H472" stroke="#dedede" stroke-width="1" stroke-dasharray="1.2,1.6"/>
<g fill="none" stroke="#c4c4c4" stroke-width="1.3"><path d="M675.4,37.6 V49.6 M670.6,49.6 H683"/><path d="M680,52.4 Q684.4,47.6 689,52.4 Q684.4,57 680,52.4Z"/><circle cx="684.6" cy="52.4" r="1.4" fill="#c4c4c4"/></g>
<g fill="none" stroke="#c4c4c4" stroke-width="1.6"><path d="M749,45.6 H735.4 V57.8 Q735.4,62.4 740,62.4 H752.6"/></g>
<path d="M740.4,59.2 L749.4,50.2" stroke="#c4c4c4" stroke-width="2.6"/><circle cx="750" cy="49.4" r="2.8" fill="none" stroke="#c4c4c4" stroke-width="1.8"/><circle cx="740" cy="59.6" r="2.2" fill="#c4c4c4"/><path d="M751.6,46.2 L753.4,48" stroke="#f7f7f7" stroke-width="1.6"/>
<g fill="none" stroke="#c4c4c4" stroke-width="1.5"><path d="M780.4,55.6 V38.2 H798"/><circle cx="789.6" cy="47.2" r="5.4"/><circle cx="789.6" cy="47.2" r="1.4" fill="#c4c4c4"/></g>
<g stroke="#dedede" stroke-width="1"><path d="M832,46V63M837.5,46V63M843,46V63M827,51.5H845M827,57H845"/></g>
<path d="M840,46 H826.6 V57 Q826.6,62.4 832,62.4 H845" fill="none" stroke="#1f6f9f" stroke-width="2"/>
<path d="M839.6,45 H845.2 L841.8,49.2 H844.6 L835.2,56.6 L838.6,51.4 H835.8 Z" fill="#f7c52a" stroke="#a8420c" stroke-width="0.9" stroke-linejoin="round"/>
<defs><linearGradient id="fold" x1="0" y1="0" x2="0" y2="1"><stop offset="0" stop-color="#fafafa"/><stop offset="1" stop-color="#d9d9d9"/></linearGradient><linearGradient id="btn" x1="0" y1="0" x2="0" y2="1"><stop offset="0" stop-color="#f7f7f7"/><stop offset="1" stop-color="#e2e2e2"/></linearGradient><radialGradient id="ball" cx="0.35" cy="0.3" r="0.8"><stop offset="0" stop-color="#ffffff" stop-opacity="0.7"/><stop offset="0.5" stop-color="#ffffff" stop-opacity="0"/></radialGradient></defs>
<g transform="translate(42.9,145.0) scale(0.9)" stroke-linejoin="round"><path d="M0.4,5.2 L3.4,4.5 L3.5,2.1 L8.2,0.4 L12.6,1.8 L12.8,6.2 L16.4,8.2 L16.5,14.3 L11.3,17 L0.4,9.6 Z" fill="#f6c81c"/><path d="M3.5,2.1 L8.2,0.4 L12.6,1.8 L7.5,3.5 Z M7.7,7.9 L12.8,6.2 L16.4,8.2 L10.9,10.3 Z" fill="#fcec95"/><path d="M7.5,3.5 L12.6,1.8 L12.8,6.2 L7.7,7.9 Z M10.9,10.3 L16.4,8.2 L16.5,14.3 L11.3,17 Z" fill="#f9df5c"/><path d="M0.4,5.2 L3.4,4.5 L3.5,2.1 L8.2,0.4 L12.6,1.8 L12.8,6.2 L16.4,8.2 L16.5,14.3 L11.3,17 L0.4,9.6 Z M3.5,2.1 L7.5,3.5 L12.6,1.8 M7.5,3.5 V7.9 L12.8,6.2 M7.7,7.9 L10.9,10.3 L16.4,8.2 M10.9,10.3 L11.3,17" fill="none" stroke="#5a4200" stroke-width="1.1"/></g>
<g transform="translate(54,194) scale(1.0)" stroke-linejoin="round"><path d="M0.4,5.2 L3.4,4.5 L3.5,2.1 L8.2,0.4 L12.6,1.8 L12.8,6.2 L16.4,8.2 L16.5,14.3 L11.3,17 L0.4,9.6 Z" fill="#f6c81c"/><path d="M3.5,2.1 L8.2,0.4 L12.6,1.8 L7.5,3.5 Z M7.7,7.9 L12.8,6.2 L16.4,8.2 L10.9,10.3 Z" fill="#fcec95"/><path d="M7.5,3.5 L12.6,1.8 L12.8,6.2 L7.7,7.9 Z M10.9,10.3 L16.4,8.2 L16.5,14.3 L11.3,17 Z" fill="#f9df5c"/><path d="M0.4,5.2 L3.4,4.5 L3.5,2.1 L8.2,0.4 L12.6,1.8 L12.8,6.2 L16.4,8.2 L16.5,14.3 L11.3,17 L0.4,9.6 Z M3.5,2.1 L7.5,3.5 L12.6,1.8 M7.5,3.5 V7.9 L12.8,6.2 M7.7,7.9 L10.9,10.3 L16.4,8.2 M10.9,10.3 L11.3,17" fill="none" stroke="#5a4200" stroke-width="1.1"/></g>
<rect x="93.4" y="194.6" width="17" height="16.6" rx="1.6" fill="#fafafa" stroke="#222" stroke-width="1.1"/><rect x="93.4" y="194.6" width="17" height="3.2" fill="#2a7ab5"/>
<g fill="#2a7ab5"><rect x="95.6" y="200.2" width="3.4" height="2"/><rect x="95.6" y="204" width="3.4" height="2"/><rect x="95.6" y="207.6" width="3.4" height="2"/></g><path d="M100.6,201.2H108.6M100.6,205H108.6M100.6,208.6H108.6" stroke="#222" stroke-width="1"/>
<path d="M137.6,199.2 H140.4 M137.6,207.6 H142.2" stroke="#222" stroke-width="2.6"/><path d="M137.6,199.2 H140.4 M137.6,207.6 H142.2" stroke="#fff" stroke-width="0.8"/><rect x="134.8" y="194.2" width="2.8" height="17.4" fill="#fff" stroke="#222" stroke-width="1"/><rect x="140" y="195.2" width="6.8" height="7" rx="1.4" fill="#f2f2f2" stroke="#222" stroke-width="1.1"/><rect x="142" y="204.2" width="6.8" height="7" rx="1.4" fill="#f2f2f2" stroke="#222" stroke-width="1.1"/>
<circle cx="182" cy="202.7" r="5.8" fill="none" stroke="#1a1a1a" stroke-width="2.1"/><path d="M182,193.4 V212 M172.8,202.7 H191.2" stroke="#1a1a1a" stroke-width="2"/>
<g><path d="M221.4,202 L212.9,202 A8.5,8.5 0 0 1 221.4,193.5 Z" fill="#2a6fd0"/><path d="M221.4,202 L221.4,193.5 A8.5,8.5 0 0 1 229.9,202 Z" fill="#d8252a"/><path d="M221.4,202 L229.9,202 A8.5,8.5 0 0 1 221.4,210.5 Z" fill="#e8b90c"/><path d="M221.4,202 L221.4,210.5 A8.5,8.5 0 0 1 212.9,202 Z" fill="#33a33a"/><ellipse cx="226.4" cy="197.6" rx="2.6" ry="4" transform="rotate(-30 226.4 197.6)" fill="#1a1a1a"/><circle cx="221.4" cy="202" r="8.5" fill="url(#ball)"/></g>
<rect x="254" y="193" width="13" height="3" fill="#2a7ab5"/><rect x="254" y="196" width="13" height="10" fill="#f7f7f7"/>
<rect x="231" y="197" width="18.4" height="18.6" fill="url(#btn)" stroke="#b9b9b9" stroke-width="1"/><rect x="250.2" y="197" width="17" height="18.6" fill="url(#btn)" stroke="#b9b9b9" stroke-width="1"/>
<path d="M242,202.6 L238.6,205.6 L242,208.6 Z M257.6,202.6 L261,205.6 L257.6,208.6 Z" fill="#111"/>
<path d="M48.2,223.2 L55,230.6 V238.4 L57.8,236.8 V230.6 L64.8,223.2 Z" fill="#efefef" stroke="#2a2a2a" stroke-width="1.1" stroke-linejoin="round"/>
<rect x="47.8" y="220.8" width="17.2" height="3.4" rx="1.7" fill="#2f86c0" stroke="#1b4f78" stroke-width="0.8"/>
<g transform="translate(45.4,244.6) scale(0.98)" stroke-linejoin="round"><path d="M0.4,5.2 L3.4,4.5 L3.5,2.1 L8.2,0.4 L12.6,1.8 L12.8,6.2 L16.4,8.2 L16.5,14.3 L11.3,17 L0.4,9.6 Z" fill="#f6c81c"/><path d="M3.5,2.1 L8.2,0.4 L12.6,1.8 L7.5,3.5 Z M7.7,7.9 L12.8,6.2 L16.4,8.2 L10.9,10.3 Z" fill="#fcec95"/><path d="M7.5,3.5 L12.6,1.8 L12.8,6.2 L7.7,7.9 Z M10.9,10.3 L16.4,8.2 L16.5,14.3 L11.3,17 Z" fill="#f9df5c"/><path d="M0.4,5.2 L3.4,4.5 L3.5,2.1 L8.2,0.4 L12.6,1.8 L12.8,6.2 L16.4,8.2 L16.5,14.3 L11.3,17 L0.4,9.6 Z M3.5,2.1 L7.5,3.5 L12.6,1.8 M7.5,3.5 V7.9 L12.8,6.2 M7.7,7.9 L10.9,10.3 L16.4,8.2 M10.9,10.3 L11.3,17" fill="none" stroke="#5a4200" stroke-width="1.1"/></g>
<path d="M49.8,271.2 L54.4,274.8 L49.8,278.4 Z" fill="#5e5e5e"/>
<path d="M67.6,283.4 V268.2 H75.6 L77,270.0 H84.4 V283.4 Z" fill="#e2e2e2" stroke="#3a3a3a" stroke-width="1.1" stroke-linejoin="round"/><rect x="67.6" y="271.0" width="16.8" height="12.4" fill="url(#fold)" stroke="#3a3a3a" stroke-width="1.1"/>
<circle cx="78.6" cy="277.6" r="3.7" fill="#fff" stroke="#222" stroke-width="1"/><path d="M75.4,275.6 L78.6,278 H81" fill="none" stroke="#222" stroke-width="0.9"/>
<path d="M78,273.2 Q73.4,273.4 73,277.8" fill="none" stroke="#2b83bd" stroke-width="2.2"/><path d="M70.2,277.2 H75.8 L73,281 Z" fill="#2b83bd"/>
<path d="M67.6,305.4 V290.2 H75.6 L77,292.0 H84.4 V305.4 Z" fill="#e2e2e2" stroke="#3a3a3a" stroke-width="1.1" stroke-linejoin="round"/><rect x="67.6" y="293.0" width="16.8" height="12.4" fill="url(#fold)" stroke="#3a3a3a" stroke-width="1.1"/>
<circle cx="76.8" cy="299.8" r="4.2" fill="#f4f4f4" stroke="#1e1e1e" stroke-width="1.2"/><path d="M74,297 L76.8,299.8 M73.4,300.6 H76.8" stroke="#888" stroke-width="0.8"/><path d="M76.8,299.8 L79.6,296.6" stroke="#2a86c4" stroke-width="1.3"/><circle cx="79" cy="302" r="1.6" fill="#e8301c"/>
<path d="M49.8,315.2 L54.4,318.8 L49.8,322.4 Z" fill="#5e5e5e"/>
<path d="M67.6,327.4 V312.2 H75.6 L77,314.0 H84.4 V327.4 Z" fill="#e2e2e2" stroke="#3a3a3a" stroke-width="1.1" stroke-linejoin="round"/><rect x="67.6" y="315.0" width="16.8" height="12.4" fill="url(#fold)" stroke="#3a3a3a" stroke-width="1.1"/>
<text x="70.4" y="326.4" style="font-family:Liberation Serif,serif" font-size="13" font-weight="bold" fill="#2a73a8">A</text>
<path d="M49.8,337.2 L54.4,340.8 L49.8,344.4 Z" fill="#5e5e5e"/>
<path d="M67.6,349.4 V334.2 H75.6 L77,336.0 H84.4 V349.4 Z" fill="#e2e2e2" stroke="#3a3a3a" stroke-width="1.1" stroke-linejoin="round"/><rect x="67.6" y="337.0" width="16.8" height="12.4" fill="url(#fold)" stroke="#3a3a3a" stroke-width="1.1"/>
<path d="M72.4,341.2 L76,339.4 L79.8,341.2 V345.8 L76,347.6 L72.4,345.8 Z" fill="#3a8fc0" stroke="#163a55" stroke-width="1"/><path d="M72.4,341.2 L76,343 L79.8,341.2 M76,343 V347.6" fill="none" stroke="#163a55" stroke-width="0.7"/>
<circle cx="68.6" cy="355" r="1.9" fill="#fff" stroke="#333" stroke-width="0.8"/><circle cx="68.6" cy="361.2" r="1.9" fill="#5ab0e0" stroke="#333" stroke-width="0.8"/><circle cx="68.6" cy="367.2" r="1.9" fill="#f0c020" stroke="#333" stroke-width="0.8"/>
<path d="M72,354.8 H84.4 M72,361 H84.4 M72,367 H75.6" stroke="#222" stroke-width="1.4"/>
<circle cx="81" cy="368" r="2.6" fill="#222"/><g stroke="#222" stroke-width="1.4"><path d="M81,364 V372 M77,368 H85 M78.2,365.2 L83.8,370.8 M78.2,370.8 L83.8,365.2"/></g><circle cx="81" cy="368" r="0.9" fill="#f7f7f7"/>
<path d="M70.5,379.7 L82.5,376.7 V390.2 L70.5,393.2 Z" fill="none" stroke="#333" stroke-width="1.1"/><path d="M76.4,375.59999999999997 V394.59999999999997" stroke="#333" stroke-width="1.1" stroke-dasharray="2.2,1.3"/>
<path d="M70.5,401.7 L82.5,398.7 V412.2 L70.5,415.2 Z" fill="none" stroke="#333" stroke-width="1.1"/><path d="M76.4,397.59999999999997 V416.59999999999997" stroke="#333" stroke-width="1.1" stroke-dasharray="2.2,1.3"/>
<path d="M70.5,423.7 L82.5,420.7 V434.2 L70.5,437.2 Z" fill="none" stroke="#333" stroke-width="1.1"/><path d="M76.4,419.59999999999997 V438.59999999999997" stroke="#333" stroke-width="1.1" stroke-dasharray="2.2,1.3"/>
<path d="M70.2,457.2 V444.6 M69.8,457.4 H82.4" stroke="#111" stroke-width="1.9"/><path d="M70.2,442.2 L67.8,446.4 H72.6 Z M85,457.4 L80.8,455 V459.8 Z" fill="#111"/><rect x="68.6" y="455.8" width="3.4" height="3.4" fill="#111"/>
<path d="M49,471 H55 L52,475 Z" fill="#5e5e5e"/>
<path d="M73.2,467.6 L78.6,464 L84.4,466.6 V478.6 L79.2,482.2 L73.2,479.4 Z" fill="#f4f4f4" stroke="#333" stroke-width="1"/><path d="M73.2,467.6 L79,470.4 L84.4,466.6 M79,470.4 V482.2" fill="none" stroke="#333" stroke-width="0.8"/>
<path d="M66.8,470 L71.2,467.6 L78.2,470.2 V477.6 L73.6,480.6 L66.8,477.6 Z" fill="#4aa6d6" stroke="#1b3f5c" stroke-width="0.9"/><path d="M66.8,470 L73.6,472.8 L78.2,470.2 M73.6,472.8 V480.6" fill="none" stroke="#1b3f5c" stroke-width="0.7"/><path d="M73.8,473.2 L78,470.8 V477.4 L73.8,480 Z" fill="#2f86bc"/>
<path d="M73.2,491 L77.8,494.6 L73.2,498.2 Z" fill="#5e5e5e"/>
<path d="M90.6,489.6 L97.4,495 L107.4,486.6 V503.2 H90.6 Z" fill="#fff" stroke="#333" stroke-width="1.1" stroke-linejoin="round"/><circle cx="101.6" cy="498.4" r="3" fill="none" stroke="#333" stroke-width="1"/>
<g fill="#8a8a8a"><circle cx="4.6" cy="138.6" r="1.05"/><circle cx="8.6" cy="138.6" r="1.05"/><circle cx="12.6" cy="138.6" r="1.05"/><circle cx="16.6" cy="138.6" r="1.05"/><circle cx="20.6" cy="138.6" r="1.05"/><circle cx="24.6" cy="138.6" r="1.05"/><circle cx="28.6" cy="138.6" r="1.05"/></g>
<path d="M30.4,136 Q32.5,134.6 34,135" stroke="#333" fill="none" stroke-width="1"/>
<rect x="10.4" y="155.4" width="14.2" height="13.8" rx="1.4" fill="none" stroke="#c6c6c6" stroke-width="1.2"/><text x="11.6" y="167.6" font-size="12" font-weight="bold" fill="#c6c6c6">A</text><circle cx="21.200000000000003" cy="159.0" r="1.8" fill="none" stroke="#c6c6c6" stroke-width="1"/><path d="M8.4,151.6L12,155.2M8.4,155.2L12,151.6M10.2,151V155.8M7.6,153.4H12.8" stroke="#c6c6c6" stroke-width="0.8"/>
<rect x="7.2" y="178.6" width="14.2" height="13.8" rx="1.4" fill="none" stroke="#c6c6c6" stroke-width="1.2"/><text x="8.4" y="190.79999999999998" font-size="12" font-weight="bold" fill="#c6c6c6">A</text><circle cx="18.0" cy="182.2" r="1.8" fill="none" stroke="#c6c6c6" stroke-width="1"/><path d="M12.6,195.4 L13.8,191.4 L22.6,182.6 L25,185 L16.2,193.8 Z" fill="#f7f7f7" stroke="#c6c6c6" stroke-width="1.2"/>
<rect x="7.4" y="204.8" width="14.2" height="13.8" rx="1.4" fill="#fff" stroke="#1e1e1e" stroke-width="1.2"/><text x="8.6" y="217.0" font-size="12" font-weight="bold" fill="#1e1e1e">A</text><circle cx="18.200000000000003" cy="208.4" r="1.8" fill="none" stroke="#1e1e1e" stroke-width="1"/><path d="M17.6,213.6 L22.6,218.6" stroke="#218a21" stroke-width="2.6"/><path d="M25.6,214 V221.8 H17.8 Z" fill="#218a21"/>
<rect x="7.4" y="230.2" width="14.2" height="13.8" rx="1.4" fill="none" stroke="#c6c6c6" stroke-width="1.2"/><text x="8.6" y="242.39999999999998" font-size="12" font-weight="bold" fill="#c6c6c6">A</text><circle cx="18.200000000000003" cy="233.79999999999998" r="1.8" fill="none" stroke="#c6c6c6" stroke-width="1"/><path d="M16.6,238.4H25.6M21.1,234V242.8M14.6,245.4H24.6" stroke="#c6c6c6" stroke-width="2.2"/>
<rect x="7.4" y="257" width="14.2" height="13.8" rx="1.4" fill="none" stroke="#c6c6c6" stroke-width="1.2"/><text x="8.6" y="269.2" font-size="12" font-weight="bold" fill="#c6c6c6">A</text><circle cx="18.200000000000003" cy="260.6" r="1.8" fill="none" stroke="#c6c6c6" stroke-width="1"/><rect x="17.8" y="260" width="6.8" height="13.8" rx="3.4" fill="#c6c6c6"/><circle cx="21.2" cy="264" r="1" fill="#f7f7f7"/><circle cx="21.2" cy="269.6" r="1" fill="#f7f7f7"/>
<rect x="7.4" y="282.6" width="14.2" height="13.8" rx="1.4" fill="none" stroke="#c6c6c6" stroke-width="1.2"/><text x="8.6" y="294.8" font-size="12" font-weight="bold" fill="#c6c6c6">A</text><circle cx="18.200000000000003" cy="286.20000000000005" r="1.8" fill="none" stroke="#c6c6c6" stroke-width="1"/><rect x="12.8" y="286.6" width="11.8" height="13.2" rx="1.4" fill="#f7f7f7" stroke="#c6c6c6" stroke-width="1.4"/><rect x="15.4" y="294.4" width="6.6" height="3.6" fill="#c6c6c6"/><path d="M15.2,289.6H22.2M15.2,291.6H22.2" stroke="#c6c6c6" stroke-width="0.9"/>
<rect x="9.2" y="310.4" width="14.2" height="13.8" rx="1.4" fill="none" stroke="#c6c6c6" stroke-width="1.2"/><text x="10.399999999999999" y="322.59999999999997" font-size="12" font-weight="bold" fill="#c6c6c6">A</text><circle cx="20.0" cy="314.0" r="1.8" fill="none" stroke="#c6c6c6" stroke-width="1"/><rect x="7" y="308" width="18" height="17.4" fill="none" stroke="#c6c6c6" stroke-width="1.6" stroke-dasharray="1.2,1.2"/>
<path d="M10.6,347.6 L22.2,337.6" stroke="#c6c6c6" stroke-width="6.4" stroke-linecap="round"/><path d="M10.6,347.6 L22.2,337.6" stroke="#f7f7f7" stroke-width="3.2" stroke-linecap="round"/><circle cx="10.8" cy="347.4" r="1.6" fill="#c6c6c6"/><circle cx="22" cy="337.8" r="1.6" fill="#c6c6c6"/>
<path d="M8.2,340.6 L13.4,335.4 M10,334.8 H13.8 V338.6 M25.6,344.6 L20.8,349.4 M24.6,345.4 V350 H20.2" stroke="#c6c6c6" stroke-width="1.2" fill="none"/>
</svg>
</body></html>
